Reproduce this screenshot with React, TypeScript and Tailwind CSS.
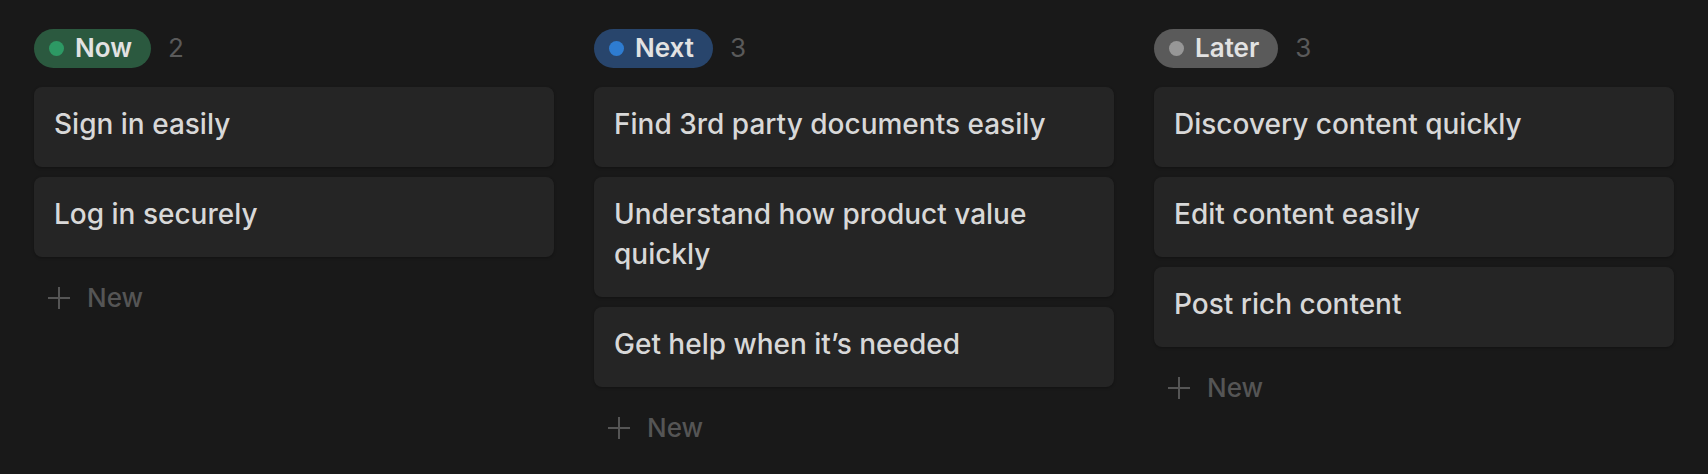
type Column = {
  label: string;
  pill: string;
  dot: string;
  cards: string[];
};

const columns: Column[] = [
  { label: 'Now', pill: 'bg-[#2b593f]', dot: 'bg-[#2d9964]', cards: ['Sign in easily', 'Log in securely'] },
  {
    label: 'Next',
    pill: 'bg-[#28456c]',
    dot: 'bg-[#2e7cd1]',
    cards: ['Find 3rd party documents easily', 'Understand how product value quickly', 'Get help when it’s needed'],
  },
  {
    label: 'Later',
    pill: 'bg-[#5a5a5a]',
    dot: 'bg-[#979797]',
    cards: ['Discovery content quickly', 'Edit content easily', 'Post rich content'],
  },
];

function PlusIcon() {
  return (
    <svg width="24" height="24" viewBox="0 0 24 24" fill="none" stroke="currentColor" strokeWidth="2">
      <line x1="12" y1="1" x2="12" y2="23" />
      <line x1="1" y1="12" x2="23" y2="12" />
    </svg>
  );
}

function BoardColumn({ col }: { col: Column }) {
  return (
    <div className="flex flex-col">
      <div className="flex items-center gap-[17px] h-10">
        <span className={`flex items-center h-[39px] rounded-full pl-[15px] pr-[19px] gap-[11px] ${col.pill}`}>
          <span className={`w-[15px] h-[15px] rounded-full ${col.dot}`} />
          <span className="text-[26px] font-semibold text-[#e2e2e2] leading-none">{col.label}</span>
        </span>
        <span className="text-[26px] text-[#5a5a5a] leading-none">{col.cards.length}</span>
      </div>
      <div className="flex flex-col gap-[10px] mt-[19px]">
        {col.cards.map((c) => (
          <div
            key={c}
            className="bg-[#252525] rounded-[8px] pl-[20px] pr-5 pt-[17px] pb-[23px] text-[28px] leading-[40px] font-medium text-[#d8d8d8] shadow-[0_1px_3px_rgba(0,0,0,0.3)]"
          >
            {c}
          </div>
        ))}
      </div>
      <div className="flex items-center gap-[16px] h-10 mt-[21px] pl-[13px] text-[#555555]">
        <PlusIcon />
        <span className="text-[26px] font-medium leading-none">New</span>
      </div>
    </div>
  );
}

export default function App() {
  return (
    <div
      className="w-[1708px] h-[474px] bg-[#191919] px-[34px] pt-[28px] grid grid-cols-3 gap-10 items-start"
      style={{ fontFamily: 'Inter, "Noto Sans", sans-serif' }}
    >
      {columns.map((col) => (
        <BoardColumn key={col.label} col={col} />
      ))}
    </div>
  );
}
